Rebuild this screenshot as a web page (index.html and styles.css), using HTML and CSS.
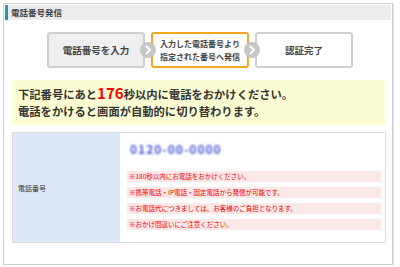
FILE: index.html
```html
<!DOCTYPE html>
<html lang="ja">

<head>
    <meta charset="utf-8">
    <meta name="viewport" content="width=device-width, initial-scale=1" />
    <title>電話番号発信</title>
    <link rel="stylesheet" href="styles.css">
</head>

<body>
    <div class="panel">
        <div class="panel-head">電話番号発信</div>
        <div class="steps">
            <div class="step step-done">電話番号を入力</div>
            <div class="arrow"><svg width="16" height="16" viewBox="0 0 16 16"><path d="M6.5 4.5 L10 8 L6.5 11.5" fill="none" stroke="#fff" stroke-width="2.2" stroke-linecap="round" stroke-linejoin="round"/></svg></div>
            <div class="step step-now">入力した電話番号より<br>指定された番号へ発信</div>
            <div class="arrow"><svg width="16" height="16" viewBox="0 0 16 16"><path d="M6.5 4.5 L10 8 L6.5 11.5" fill="none" stroke="#fff" stroke-width="2.2" stroke-linecap="round" stroke-linejoin="round"/></svg></div>
            <div class="step">認証完了</div>
        </div>
        <div class="notice">
            <p>下記番号にあと<span class="count">176</span>秒以内に電話をおかけください。</p>
            <p>電話をかけると画面が自動的に切り替わります。</p>
        </div>
        <div class="info">
            <div class="info-label">電話番号</div>
            <div class="info-body">
                <div class="tel">0120-00-0000</div>
                <div class="note note-first">※180秒以内にお電話をおかけください。</div>
                <div class="note">※携帯電話・IP電話・固定電話から発信が可能です。</div>
                <div class="note">※お電話代につきましては、お客様のご負担となります。</div>
                <div class="note">※おかけ間違いにご注意ください。</div>
            </div>
        </div>
    </div>
</body>

</html>
```

FILE: styles.css
```css
body {
    margin: 0;
    background: #fff;
    font-family: "Noto Sans CJK JP", "Noto Sans", sans-serif;
    color: #333;
}

p {
    margin: 0;
}

.panel {
    margin: 3px 0 0 3px;
    width: 388px;
    height: 260px;
    border: 1px solid #cfcfcf;
    box-shadow: 1px 1px 1px #e2e2e2;
    background: #fff;
}

.panel-head {
    margin: 1px;
    height: 15px;
    line-height: 15px;
    background: #ececec;
    border-left: 3px solid #1f9aa8;
    padding-left: 3px;
    font-size: 8.5px;
    font-weight: bold;
    color: #444;
}

.steps {
    display: flex;
    align-items: center;
    justify-content: center;
    margin-top: 12px;
    padding-left: 4px;
}

.step {
    width: 94px;
    height: 32px;
    border: 2px solid #cfcfcf;
    border-radius: 3px;
    display: flex;
    align-items: center;
    justify-content: center;
    text-align: center;
    font-size: 9.5px;
    font-weight: bold;
    color: #444;
    background: #fff;
}

.step-done {
    background: #efefef;
}

.step-now {
    border-color: #f5a623;
    font-size: 8px;
    line-height: 13px;
}

.arrow {
    width: 16px;
    height: 16px;
    border-radius: 50%;
    background: #c6c6c6;
    margin: 0 -5px;
    position: relative;
    z-index: 1;
}

.arrow svg {
    display: block;
}

.notice {
    margin: 12px 6px 0 8px;
    height: 45px;
    background: #fdfdd3;
    padding: 4px 0 0 6px;
    box-sizing: border-box;
    font-size: 11.3px;
    font-weight: bold;
    line-height: 17px;
    color: #333;
}

.count {
    color: #f00;
    font-size: 15px;
}

.info {
    display: flex;
    margin: 7px 6px 0 8px;
    height: 111px;
    border: 1px solid #dcdcdc;
    box-sizing: border-box;
}

.info-label {
    width: 107px;
    background: #dde9f8;
    display: flex;
    align-items: center;
    padding-left: 5px;
    box-sizing: border-box;
    font-size: 7px;
    color: #333;
}

.info-body {
    flex: 1;
    padding: 8px 4px 0 7px;
}

.tel {
    font-size: 12px;
    font-weight: bold;
    color: #4a5ad8;
    filter: blur(1.3px);
    height: 15px;
    line-height: 15px;
    letter-spacing: 1px;
    margin-left: 3px;
}

.note {
    background: #fde8e8;
    color: #e00;
    font-size: 6.5px;
    height: 11px;
    line-height: 11px;
    padding-left: 2px;
    margin-top: 5px;
}

.note-first {
    margin-top: 15px;
}
```
